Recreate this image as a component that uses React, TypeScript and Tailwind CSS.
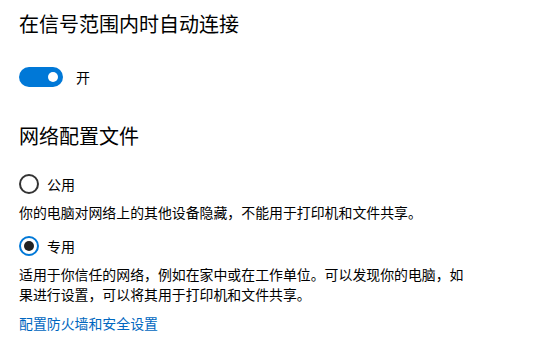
import React from "react";

const FONT = "font-['Segoe_UI','Noto_Sans_CJK_SC',sans-serif]";

function Toggle({ on }: { on: boolean }) {
  return (
    <div
      className={`w-[44px] h-[20px] rounded-full flex items-center px-[5px] ${
        on ? "bg-[#0078d7] justify-end" : "border-2 border-black justify-start"
      }`}
    >
      <div className={`w-[10px] h-[10px] rounded-full ${on ? "bg-white" : "bg-black"}`} />
    </div>
  );
}

function Radio({ checked, label }: { checked: boolean; label: string }) {
  return (
    <div className="flex items-center h-[20px]">
      <div
        className={`w-[20px] h-[20px] rounded-full border-2 flex items-center justify-center ${
          checked ? "border-[#0078d7]" : "border-[#333]"
        }`}
      >
        {checked && <div className="w-[10px] h-[10px] rounded-full bg-[#222]" />}
      </div>
      <span className="ml-[8px] text-[14px] leading-[20px] text-black">{label}</span>
    </div>
  );
}

export default function App() {
  return (
    <div className={`w-[543px] h-[349px] bg-white pl-[19px] pt-[10px] ${FONT}`}>
      <h2 className="text-[20px] leading-[28px] text-black">在信号范围内时自动连接</h2>

      <div className="mt-[29px] flex items-center">
        <Toggle on />
        <span className="ml-[13px] text-[14px] leading-[20px] text-black">开</span>
      </div>

      <h2 className="mt-[35px] text-[20px] leading-[28px] text-black">网络配置文件</h2>

      <div className="mt-[24px]">
        <Radio checked={false} label="公用" />
      </div>
      <p className="mt-[8px] text-[13.9px] leading-[20px] text-black">
        你的电脑对网络上的其他设备隐藏，不能用于打印机和文件共享。
      </p>

      <div className="mt-[14px]">
        <Radio checked label="专用" />
      </div>
      <p className="mt-[8px] w-[452px] text-[13.9px] leading-[20px] text-black">
        适用于你信任的网络，例如在家中或在工作单位。可以发现你的电脑，如果进行设置，可以将其用于打印机和文件共享。
      </p>

      <a className="block mt-[9px] text-[13.9px] leading-[20px] text-[#0067c0] cursor-pointer">
        配置防火墙和安全设置
      </a>
    </div>
  );
}
